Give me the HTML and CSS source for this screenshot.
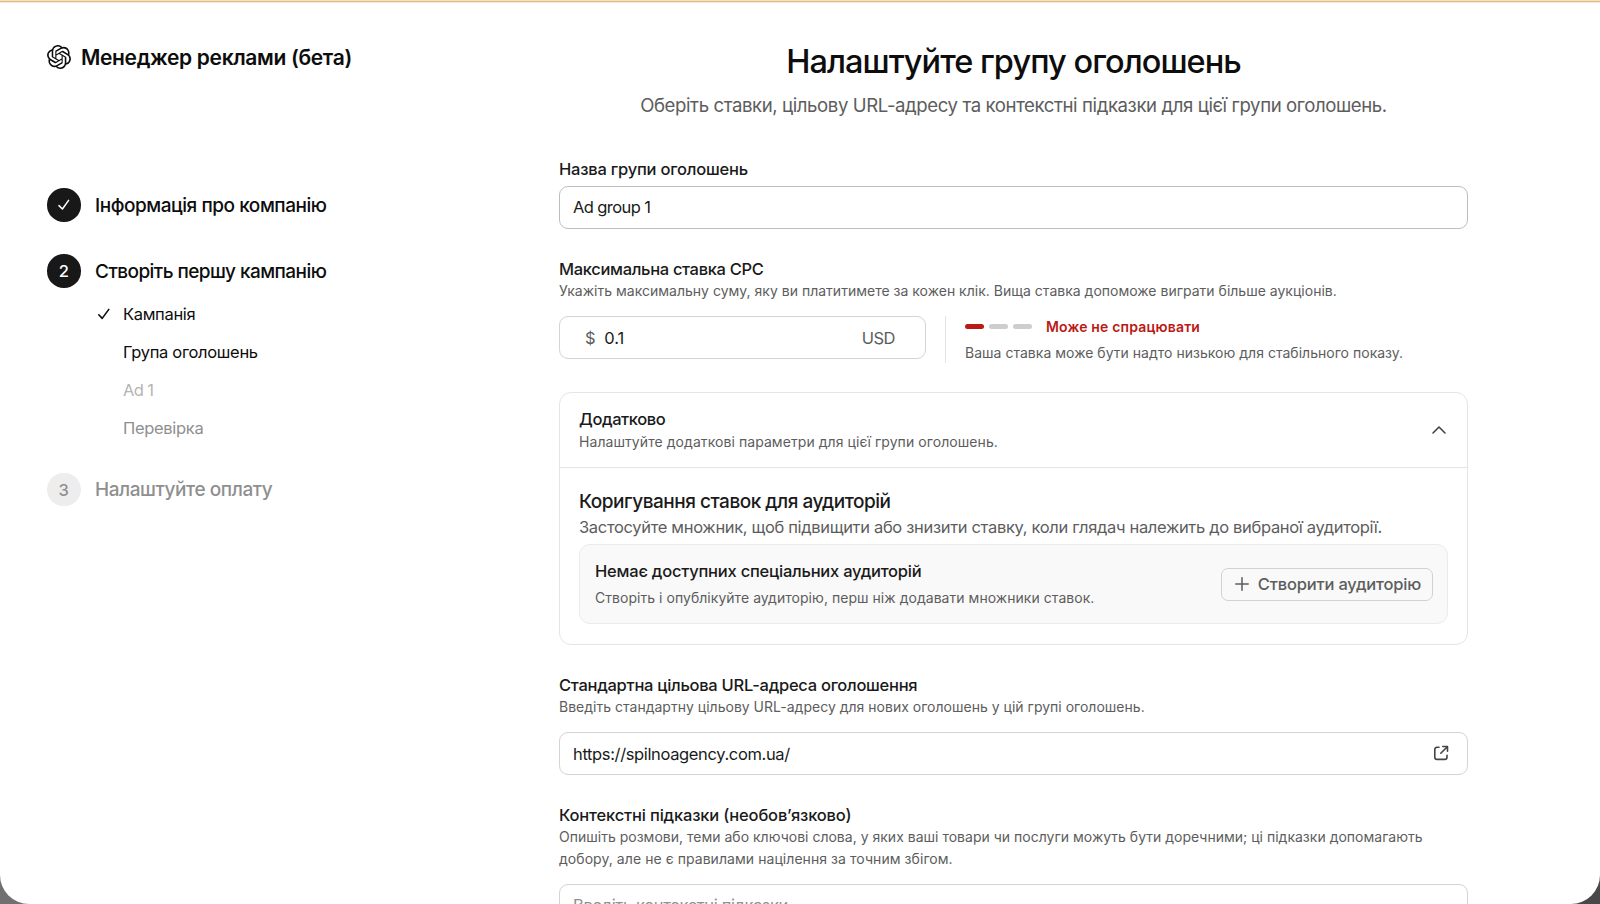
FILE: index.html
```
<!DOCTYPE html>
<html lang="uk">
<head>
<meta charset="utf-8">
<title>Менеджер реклами</title>
<link rel="stylesheet" href="styles.css">
</head>
<body>
<div class="top-strip"></div>
<div class="page">
  <aside class="sidebar">
    <div class="brand">
      <svg class="brand-logo" viewBox="0 0 24 24"><path d="M22.2819 9.8211a5.9847 5.9847 0 0 0-.5157-4.9108 6.0462 6.0462 0 0 0-6.5098-2.9A6.0651 6.0651 0 0 0 4.9807 4.1818a5.9847 5.9847 0 0 0-3.9977 2.9 6.0462 6.0462 0 0 0 .7427 7.0966 5.98 5.98 0 0 0 .511 4.9107 6.051 6.051 0 0 0 6.5146 2.9001A5.9847 5.9847 0 0 0 13.2599 24a6.0557 6.0557 0 0 0 5.7718-4.2058 5.9894 5.9894 0 0 0 3.9977-2.9001 6.0557 6.0557 0 0 0-.7475-7.0729zm-9.022 12.6081a4.4755 4.4755 0 0 1-2.8764-1.0408l.1419-.0804 4.7783-2.7582a.7948.7948 0 0 0 .3927-.6813v-6.7369l2.02 1.1686a.071.071 0 0 1 .038.052v5.5826a4.504 4.504 0 0 1-4.4945 4.4944zm-9.6607-4.1254a4.4708 4.4708 0 0 1-.5346-3.0137l.142.0852 4.783 2.7582a.7712.7712 0 0 0 .7806 0l5.8428-3.3685v2.3324a.0804.0804 0 0 1-.0332.0615L9.74 19.9502a4.4992 4.4992 0 0 1-6.1408-1.6464zM2.3408 7.8956a4.485 4.485 0 0 1 2.3655-1.9728V11.6a.7664.7664 0 0 0 .3879.6765l5.8144 3.3543-2.0201 1.1685a.0757.0757 0 0 1-.071 0l-4.8303-2.7865A4.504 4.504 0 0 1 2.3408 7.872zm16.5963 3.8558L13.1038 8.364 15.1192 7.2a.0757.0757 0 0 1 .071 0l4.8303 2.7913a4.4944 4.4944 0 0 1-.6765 8.1042v-5.6772a.79.79 0 0 0-.407-.667zm2.0107-3.0231l-.142-.0852-4.7735-2.7818a.7759.7759 0 0 0-.7854 0L9.409 9.2297V6.8974a.0662.0662 0 0 1 .0284-.0615l4.8303-2.7866a4.4992 4.4992 0 0 1 6.6802 4.66zM8.3065 12.863l-2.02-1.1638a.0804.0804 0 0 1-.038-.0567V6.0742a4.4992 4.4992 0 0 1 7.3757-3.4537l-.142.0805L8.704 5.459a.7948.7948 0 0 0-.3927.6813zm1.0976-2.3654l2.602-1.4998 2.6069 1.4998v2.9994l-2.5974 1.4997-2.6067-1.4997Z"/></svg>
      <span class="brand-name">Менеджер реклами (бета)</span>
    </div>
    <nav class="steps">
      <div class="step">
        <span class="step-badge"><svg class="badge-check" viewBox="0 0 14 14"><path d="M2 7.6 5.4 11 11.6 2.4"/></svg></span>
        <span class="step-name">Інформація про компанію</span>
      </div>
      <div class="step current">
        <span class="step-badge">2</span>
        <span class="step-name">Створіть першу кампанію</span>
      </div>
      <div class="substeps">
        <div class="substep"><svg class="sub-check" viewBox="0 0 14 14"><path d="M1.8 7.8 5.2 11.4 11.8 2.4"/></svg><span>Кампанія</span></div>
        <div class="substep"><span>Група оголошень</span></div>
        <div class="substep faint"><span>Ad 1</span></div>
        <div class="substep muted"><span>Перевірка</span></div>
      </div>
      <div class="step upcoming">
        <span class="step-badge">3</span>
        <span class="step-name">Налаштуйте оплату</span>
      </div>
    </nav>
  </aside>
  <main class="form">
    <h1 class="title">Налаштуйте групу оголошень</h1>
    <p class="subtitle">Оберіть ставки, цільову URL-адресу та контекстні підказки для цієї групи оголошень.</p>

    <section class="field name-field">
      <div class="label">Назва групи оголошень</div>
      <div class="input strong"><span class="value name-value">Ad group 1</span></div>
    </section>

    <section class="field">
      <div class="label cpc">Максимальна ставка CPC</div>
      <div class="hint">Укажіть максимальну суму, яку ви платитимете за кожен клік. Вища ставка допоможе виграти більше аукціонів.</div>
      <div class="bid-row">
        <div class="input bid-input"><span class="currency">$</span><span class="value">0.1</span><span class="unit">USD</span></div>
        <div class="bid-status">
          <div class="strength">
            <i class="bar on"></i><i class="bar"></i><i class="bar"></i>
            <span class="strength-text">Може не спрацювати</span>
          </div>
          <div class="hint">Ваша ставка може бути надто низькою для стабільного показу.</div>
        </div>
      </div>
    </section>

    <section class="card">
      <div class="card-head">
        <div>
          <div class="label extra">Додатково</div>
          <div class="hint extra-hint">Налаштуйте додаткові параметри для цієї групи оголошень.</div>
        </div>
        <svg class="chevron" viewBox="0 0 16 16"><path d="M2 11 8 5l6 6"/></svg>
      </div>
      <div class="card-body">
        <h2 class="section-title">Коригування ставок для аудиторій</h2>
        <p class="section-text">Застосуйте множник, щоб підвищити або знизити ставку, коли глядач належить до вибраної аудиторії.</p>
        <div class="empty">
          <div class="empty-text">
            <div class="label">Немає доступних спеціальних аудиторій</div>
            <div class="hint empty-hint">Створіть і опублікуйте аудиторію, перш ніж додавати множники ставок.</div>
          </div>
          <button class="create" type="button"><svg class="plus" viewBox="0 0 14 14"><path d="M7 .8v12.4M.8 7h12.4"/></svg><span>Створити аудиторію</span></button>
        </div>
      </div>
    </section>

    <section class="field">
      <div class="label url-label">Стандартна цільова URL-адреса оголошення</div>
      <div class="hint">Введіть стандартну цільову URL-адресу для нових оголошень у цій групі оголошень.</div>
      <div class="input"><span class="value">https://spilnoagency.com.ua/</span>
        <svg class="external" viewBox="0 0 16 16"><path d="M6 2.2H4a2.2 2.2 0 0 0-2.2 2.2v7.8A2.2 2.2 0 0 0 4 14.4h7.8a2.2 2.2 0 0 0 2.2-2.2v-2M9.8 1.5h4.7v4.7M14.3 1.7 7.8 8.2"/></svg>
      </div>
    </section>

    <section class="field">
      <div class="label context">Контекстні підказки (необов’язково)</div>
      <div class="hint">Опишіть розмови, теми або ключові слова, у яких ваші товари чи послуги можуть бути доречними; ці підказки допомагають<br><span class="loose">добору, але не є правилами націлення за точним збігом.</span></div>
      <div class="input"><span class="placeholder">Введіть контекстні підказки</span></div>
    </section>
  </main>
</div>
</body>
</html>
```
FILE: styles.css
```
* { box-sizing: border-box; }
html, body { height: 100%; }
body {
  margin: 0;
  overflow: hidden;
  background: linear-gradient(90deg, #707070, #484848);
  color: #1a1a1a;
  font-family: Inter, "Noto Sans", sans-serif;
  font-size: 16.5px;
}
h1, h2, p { margin: 0; font-weight: 500; }
svg { display: block; fill: none; stroke: currentColor; stroke-linecap: round; stroke-linejoin: round; flex: none; }

.top-strip { height: 3px; background: linear-gradient(#fddfb6 0 1px, #dfbb94 1px 2px, #f0e6dc 2px 3px); }
.page { display: flex; height: 901px; overflow: hidden; background: #fff; border-radius: 0 0 29px 29px; }

.sidebar { width: 559px; flex: none; padding: 42px 0 0 47px; color: #0d0d0d; }
.brand { display: flex; align-items: center; gap: 10px; height: 24px; }
.brand-logo { width: 24px; height: 24px; fill: currentColor; stroke: none; }
.brand-name { padding-top: 2px; font-size: 21px; font-weight: 600; line-height: 28px; letter-spacing: -.35px; white-space: nowrap; }
.steps { padding-top: 119px; }
.step { display: flex; align-items: center; gap: 14.5px; height: 34px; margin-bottom: 32px; }
.step-badge { display: flex; align-items: center; justify-content: center; width: 33.5px; height: 33.5px; border-radius: 50%; background: #181818; color: #fff; font-size: 16.5px; font-weight: 500; }
.badge-check { width: 14px; height: 14px; stroke-width: 1.5; }
.step-name { padding-top: 2px; font-size: 19px; font-weight: 500; line-height: 26px; letter-spacing: -.46px; white-space: nowrap; }
.current .step-name { letter-spacing: -.55px; }
.substeps { margin: -25px 0 25.5px 48px; }
.substep { display: flex; align-items: center; height: 38px; padding-left: 28px; font-size: 16.5px; letter-spacing: -.32px; white-space: nowrap; }
.sub-check { width: 14px; height: 14px; margin: 0 12px 0 -26px; stroke-width: 1.6; }
.faint { color: #b4b4b4; letter-spacing: -.6px; }
.muted { color: #8f8f8f; }
.upcoming { color: #8f8f8f; }
.upcoming .step-badge { background: #ededed; color: #8f8f8f; }
.upcoming .step-name { padding-top: 1px; letter-spacing: -.43px; }

.form { width: 909px; padding-top: 39px; }
.title { font-size: 32.5px; line-height: 40px; letter-spacing: -.95px; text-align: center; color: #0d0d0d; white-space: nowrap; }
.subtitle { margin-top: 9px; font-size: 18.6px; font-weight: 400; line-height: 28px; letter-spacing: -.41px; text-align: center; color: #5d5d5d; white-space: nowrap; }
.field { margin-top: 29px; }
.name-field { margin-top: 39px; }
.label { font-weight: 500; line-height: 22px; letter-spacing: -.22px; white-space: nowrap; }
.cpc { letter-spacing: -.32px; }
.extra { letter-spacing: -.4px; }
.context { letter-spacing: -.17px; }
.url-label { letter-spacing: -.27px; }
.hint { font-size: 14px; line-height: 21.5px; letter-spacing: .01px; color: #5d5d5d; white-space: nowrap; }
.extra-hint { letter-spacing: .07px; }
.empty-hint { letter-spacing: .04px; }
.loose { letter-spacing: .06px; }
.input { display: flex; align-items: center; justify-content: space-between; height: 43px; padding: 0 18px 0 13px; border: 1px solid #d4d4d4; border-radius: 9px; background: #fff; letter-spacing: -.36px; }
.field > .hint + .input { margin-top: 14.5px; }
.label + .input { margin-top: 6px; }
.strong { border-color: #bdbdbd; padding-bottom: 1px; }
.name-value { letter-spacing: -.6px; }
.placeholder { color: #8f8f8f; }

.bid-row { display: flex; margin-top: 14.5px; height: 47px; }
.bid-input { width: 367px; justify-content: flex-start; padding: 0 30px 0 25px; }
.currency { color: #5d5d5d; margin-right: 9px; }
.bid-input .value { letter-spacing: 0; }
.unit { color: #5d5d5d; margin-left: auto; letter-spacing: -.5px; }
.bid-status { margin-left: 19px; padding-left: 19px; border-left: 1px solid #e3e3e3; }
.strength { display: flex; align-items: center; gap: 5px; height: 21px; }
.bar { width: 19px; height: 5px; border-radius: 3px; background: #cdcdcd; }
.bar.on { background: #ba1a16; }
.strength-text { margin-left: 9px; font-size: 14px; font-weight: 600; letter-spacing: .17px; color: #ba1a16; }
.bid-status .hint { margin-top: 5px; letter-spacing: .02px; }

.card { margin-top: 29px; border: 1px solid #e5e5e5; border-radius: 12px; }
.card-head { display: flex; align-items: center; justify-content: space-between; height: 75px; padding: 0 20px 0 19px; border-bottom: 1px solid #e5e5e5; }
.extra-hint { padding-top: .5px; }
.chevron { width: 16px; height: 16px; stroke-width: 1.6; color: #444; }
.card-body { padding: 21px 19px 20px; }
.section-title { font-size: 19px; line-height: 26px; letter-spacing: -.48px; }
.section-text { font-size: 16.5px; font-weight: 400; line-height: 24px; letter-spacing: -.33px; color: #5d5d5d; white-space: nowrap; }
.empty { display: flex; align-items: center; justify-content: space-between; height: 80px; margin-top: 5px; padding: 0 14px 0 15px; border: 1px solid #ebebeb; border-radius: 11px; background: #f9f9f9; }
.empty-text { display: grid; gap: 5px; padding-top: 1px; }
.create { display: flex; align-items: center; justify-content: center; gap: 9px; width: 212px; height: 33px; padding: 0 0 0 2px; border: 1px solid #d2d2d2; border-radius: 7px; background: transparent; color: #5d5d5d; font: 500 16.5px Inter, sans-serif; letter-spacing: -.18px; white-space: nowrap; }
.plus { width: 14px; height: 14px; stroke-width: 1.5; }
.external { width: 16px; height: 16px; margin-top: -1px; stroke-width: 1.6; color: #444; }
```
